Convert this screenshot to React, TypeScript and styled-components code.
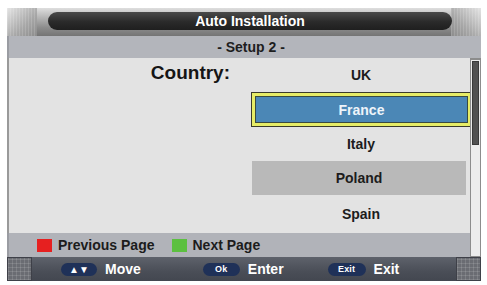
import React from "react";
import styled, { createGlobalStyle } from "styled-components";

const Global = createGlobalStyle`
  html, body { margin: 0; padding: 0; background: #ffffff; }
  body { font-family: "Liberation Sans", Arial, sans-serif; }
`;

const Frame = styled.div`
  margin: 8px 0 0 7px;
  width: 474px;
  display: flex;
  flex-direction: column;
  font-weight: bold;
`;

const Header = styled.div`
  position: relative;
  height: 28px;
  box-sizing: border-box;
  padding: 4px 29px 6px 41px;
  display: flex;
  background: linear-gradient(#dedede 0%, #b4b4b4 35%, #8c8c8c 70%, #747474 100%);
`;

const HeaderCorner = styled.div<{ $side: "left" | "right" }>`
  position: absolute;
  top: 0;
  ${(p) => (p.$side === "left" ? "left: 0;" : "right: 0;")}
  width: 30px;
  height: 100%;
  background:
    repeating-linear-gradient(90deg, rgba(255,255,255,0.14) 0 1px, transparent 1px 3px),
    linear-gradient(${(p) => (p.$side === "left" ? "135deg" : "225deg")}, #e4e4e4, #a8a8a8 60%, #8c8c8c);
`;

const TitlePill = styled.div`
  position: relative;
  flex: 1;
  border-radius: 9px;
  background: linear-gradient(#4a4a4a, #2a2a2a 55%, #1f1f1f);
  display: flex;
  align-items: center;
  justify-content: center;
  color: #ffffff;
  font-size: 14px;
`;

const SubBand = styled.div`
  height: 22px;
  background: #b3b5bb;
  border-left: 2px solid #9a9ca2;
  display: flex;
  align-items: center;
  justify-content: center;
  padding-left: 12px;
  color: #1e1e1e;
  font-size: 14px;
`;

const Body = styled.div`
  display: flex;
`;

const MainCol = styled.div`
  flex: 1;
  display: flex;
  flex-direction: column;
`;

const Content = styled.div`
  height: 175px;
  background: #e3e3e3;
  border-left: 2px solid #9a9a9a;
  display: flex;
`;

const LabelCol = styled.div`
  width: 242px;
  box-sizing: border-box;
  padding: 4px 21px 0 0;
  text-align: right;
  font-size: 19px;
  color: #151515;
`;

const List = styled.div`
  flex: 1;
  display: flex;
  flex-direction: column;
  padding: 0 0 0 1px;
`;

const Row = styled.div<{ $kind?: "selected" | "shaded" | "last" }>`
  height: 34px;
  display: flex;
  align-items: center;
  justify-content: center;
  font-size: 14px;
  color: #1c1c1c;
  box-sizing: border-box;
  ${(p) =>
    p.$kind === "selected" &&
    `
    height: 35px;
    margin: 0 -2px 0 -1px;
    background: #4b87b6;
    border: 4px solid #e6ec66;
    outline: 1px solid #3a3a2a;
    outline-offset: -1px;
    box-shadow: inset 0 0 0 1px #3a4a40;
    color: #eef4fa;
  `}
  ${(p) =>
    p.$kind === "shaded" &&
    `
    background: #b9b9b9;
    margin-right: 4px;
  `}
  ${(p) => p.$kind === "last" && `height: 38px;`}
`;

const Legend = styled.div`
  height: 24px;
  background: #b1b3b9;
  border-left: 2px solid #9a9ca2;
  display: flex;
  align-items: center;
  padding-left: 28px;
  font-size: 14px;
  color: #1c1c1c;
`;

const Key = styled.span<{ $color: string }>`
  width: 15px;
  height: 13px;
  background: ${(p) => p.$color};
  margin-right: 6px;
`;

const KeyLabel = styled.span`
  margin-right: 17px;
`;

const ScrollTrack = styled.div`
  width: 11px;
  box-sizing: border-box;
  background: #ececec;
  border: 1px solid #8c8c8c;
  border-top: 2px solid #8c8c8c;
  padding: 1px 1px 0 1px;
  display: flex;
  flex-direction: column;
`;

const ScrollThumb = styled.div`
  height: 82px;
  background: #525252;
  border: 1px solid #3a3a3a;
`;

const Footer = styled.div`
  height: 24px;
  background: linear-gradient(#5e626b, #4a4e57 60%, #434750);
  display: flex;
  align-items: center;
  color: #ffffff;
  font-size: 14px;
`;

const FooterCorner = styled.div`
  width: 25px;
  height: 100%;
  box-sizing: border-box;
  border: 1px solid #3e4048;
  background:
    repeating-linear-gradient(0deg, rgba(255,255,255,0.12) 0 1px, transparent 1px 4px),
    repeating-linear-gradient(90deg, rgba(255,255,255,0.12) 0 1px, transparent 1px 4px),
    #6a6c72;
`;

const Hints = styled.div`
  flex: 1;
  display: flex;
  align-items: center;
  padding-left: 29px;
`;

const Pill = styled.span<{ $w: number; $size: number }>`
  width: ${(p) => p.$w}px;
  height: 13px;
  border-radius: 7px;
  background: #1f3158;
  display: inline-flex;
  align-items: center;
  justify-content: center;
  font-size: ${(p) => p.$size}px;
  color: #ffffff;
  margin-right: 8px;
  letter-spacing: 0.2px;
`;

const HintLabel = styled.span<{ $gap: number }>`
  margin-right: ${(p) => p.$gap}px;
`;

export default function App() {
  return (
    <>
      <Global />
      <Frame>
        <Header>
          <HeaderCorner $side="left" />
          <HeaderCorner $side="right" />
          <TitlePill>Auto Installation</TitlePill>
        </Header>
        <SubBand>- Setup 2 -</SubBand>
        <Body>
          <MainCol>
            <Content>
              <LabelCol>Country:</LabelCol>
              <List>
                <Row>UK</Row>
                <Row $kind="selected">France</Row>
                <Row>Italy</Row>
                <Row $kind="shaded">Poland</Row>
                <Row $kind="last">Spain</Row>
              </List>
            </Content>
            <Legend>
              <Key $color="#e62020" />
              <KeyLabel>Previous Page</KeyLabel>
              <Key $color="#5cc040" />
              <span>Next Page</span>
            </Legend>
          </MainCol>
          <ScrollTrack>
            <ScrollThumb />
          </ScrollTrack>
        </Body>
        <Footer>
          <FooterCorner />
          <Hints>
            <Pill $w={36} $size={10}>▲▼</Pill>
            <HintLabel $gap={62}>Move</HintLabel>
            <Pill $w={37} $size={9}>Ok</Pill>
            <HintLabel $gap={44}>Enter</HintLabel>
            <Pill $w={38} $size={9}>Exit</Pill>
            <HintLabel $gap={0}>Exit</HintLabel>
          </Hints>
          <FooterCorner />
        </Footer>
      </Frame>
    </>
  );
}
